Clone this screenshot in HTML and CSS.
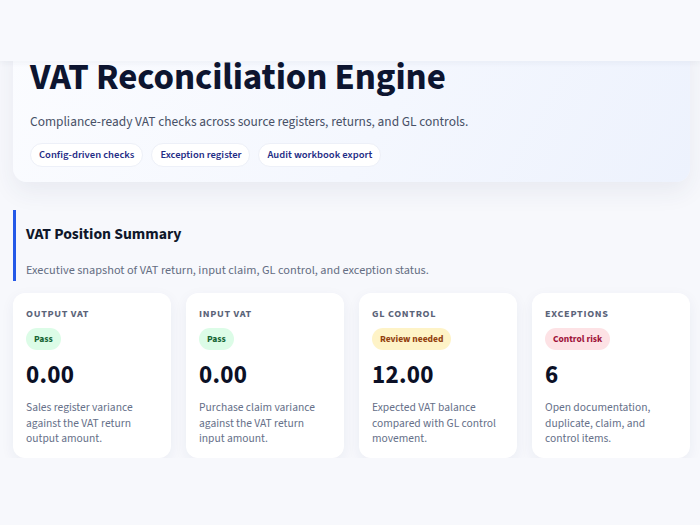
FILE: index.html
```html
<!DOCTYPE html>
<html>

<head>
    <meta charset="UTF-8">
    <title>VAT Reconciliation Engine</title>
    <link rel="stylesheet" href="styles.css">
</head>

<body>
    <div id="topbar"></div>
    <main id="page">
        <section class="hero">
            <h1 class="hero_title">VAT Reconciliation Engine</h1>
            <p class="hero_lead">Compliance-ready VAT checks across source registers, returns, and GL controls.</p>
            <ul class="chips">
                <li>Config-driven checks</li>
                <li>Exception register</li>
                <li>Audit workbook export</li>
            </ul>
        </section>

        <section class="summary">
            <div class="section_head">
                <h2>VAT Position Summary</h2>
                <p>Executive snapshot of VAT return, input claim, GL control, and exception status.</p>
            </div>
            <div class="cards">
                <div class="card">
                    <p class="card_label">Output VAT</p>
                    <span class="badge pass">Pass</span>
                    <p class="card_value">0.00</p>
                    <p class="card_note">Sales register variance against the VAT return output amount.</p>
                </div>
                <div class="card">
                    <p class="card_label">Input VAT</p>
                    <span class="badge pass">Pass</span>
                    <p class="card_value">0.00</p>
                    <p class="card_note">Purchase claim variance against the VAT return input amount.</p>
                </div>
                <div class="card">
                    <p class="card_label">GL Control</p>
                    <span class="badge review">Review needed</span>
                    <p class="card_value">12.00</p>
                    <p class="card_note">Expected VAT balance compared with GL control movement.</p>
                </div>
                <div class="card">
                    <p class="card_label">Exceptions</p>
                    <span class="badge risk">Control risk</span>
                    <p class="card_value">6</p>
                    <p class="card_note">Open documentation, duplicate, claim, and control items.</p>
                </div>
            </div>
        </section>
    </main>
</body>

</html>
```

FILE: styles.css
```css
* {
    margin: 0;
    padding: 0;
    box-sizing: border-box;
}

html,
body {
    width: 100%;
    background: #f7f8fc;
    font-family: "Source Sans 3", "Source Sans Pro", Lato, sans-serif;
    color: #0f172a;
}

#topbar {
    position: fixed;
    top: 0;
    left: 0;
    width: 100%;
    height: 61px;
    background: #f8f9fd;
    box-shadow: 0 2px 6px rgba(40, 50, 90, 0.05);
    z-index: 10;
}

#page {
    padding: 30px 10px 0 13px;
}

.hero {
    background: linear-gradient(120deg, #fbfcff 0%, #f4f7fe 55%, #edf2fd 100%);
    border-radius: 14px;
    box-shadow: 0 10px 24px rgba(40, 50, 100, 0.07);
    padding: 26px 17px 15px;
}

.hero_title {
    font-size: 37px;
    font-weight: 700;
    line-height: 44px;
    color: #0d1530;
    letter-spacing: -0.1px;
}

.hero_lead {
    margin-top: 12px;
    font-size: 13.4px;
    color: #475066;
}

.chips {
    list-style: none;
    display: flex;
    gap: 8px;
    margin-top: 12px;
}

.chips li {
    background: #ffffff;
    border: 1px solid #edf0f8;
    border-radius: 12px;
    padding: 5px 8px;
    font-size: 10.6px;
    font-weight: 600;
    line-height: 12px;
    color: #1f2d86;
}

.summary {
    margin-top: 28px;
}

.section_head {
    border-left: 3px solid #2459e8;
    padding: 13px 0 2px 10px;
}

.section_head h2 {
    font-size: 15.7px;
    font-weight: 700;
    color: #0f172a;
}

.section_head p {
    margin-top: 16px;
    font-size: 12.3px;
    color: #646d82;
}

.cards {
    display: grid;
    grid-template-columns: repeat(4, 158px);
    gap: 15px;
    margin-top: 12px;
}

.card {
    background: #ffffff;
    border-radius: 12px;
    box-shadow: 0 4px 14px rgba(40, 50, 100, 0.06);
    padding: 14px 13px 12px;
    height: 165px;
}

.card_label {
    font-size: 10.2px;
    font-weight: 700;
    letter-spacing: 0.7px;
    text-transform: uppercase;
    color: #5b6479;
}

.badge {
    display: inline-block;
    margin-top: 7px;
    padding: 4px 8px;
    border-radius: 11px;
    font-size: 9.5px;
    font-weight: 700;
    line-height: 14px;
}

.badge.pass {
    background: #dcfce7;
    color: #166534;
}

.badge.review {
    background: #fef3c7;
    color: #92400e;
}

.badge.risk {
    background: #fde2e5;
    color: #9f1239;
}

.card_value {
    margin-top: 10px;
    font-size: 25px;
    font-weight: 700;
    line-height: 30px;
    color: #0b1026;
    letter-spacing: 0.3px;
}

.card_note {
    margin-top: 10px;
    font-size: 11.5px;
    line-height: 15.5px;
    color: #667089;
}
```
